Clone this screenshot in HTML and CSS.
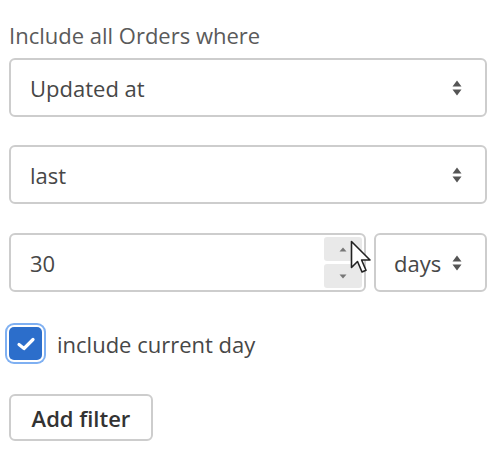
FILE: index.html
```html
<!DOCTYPE html>
<html>
<head>
<meta charset="utf-8">
<link rel="stylesheet" href="styles.css">
</head>
<body>
<div class="panel">
  <div class="title">Include all Orders where</div>
  <div class="select">
    <span class="value">Updated at</span>
    <svg class="arrows" width="10" height="16" viewBox="0 0 10 16"><path d="M5 0.5L9.5 6.5H0.5Z M5 15.5L9.5 9.5H0.5Z" fill="#555"/></svg>
  </div>
  <div class="select">
    <span class="value">last</span>
    <svg class="arrows" width="10" height="16" viewBox="0 0 10 16"><path d="M5 0.5L9.5 6.5H0.5Z M5 15.5L9.5 9.5H0.5Z" fill="#555"/></svg>
  </div>
  <div class="row">
    <div class="number">
      <span class="value">30</span>
      <div class="spin">
        <div class="spin-btn"><svg width="8" height="5" viewBox="0 0 8 5"><path d="M4 0.5L7.5 4.5H0.5Z" fill="#777"/></svg></div>
        <div class="spin-btn"><svg width="8" height="5" viewBox="0 0 8 5"><path d="M4 4.5L7.5 0.5H0.5Z" fill="#777"/></svg></div>
      </div>
    </div>
    <div class="select small">
      <span class="value">days</span>
      <svg class="arrows" width="10" height="16" viewBox="0 0 10 16"><path d="M5 0.5L9.5 6.5H0.5Z M5 15.5L9.5 9.5H0.5Z" fill="#555"/></svg>
    </div>
    <svg class="cursor" width="24" height="36" viewBox="0 0 24 36"><path d="M1.5 1.5V27.5L7.5 21.5L12 32L16 30.3L11.6 20H20Z" fill="#fff" stroke="#222" stroke-width="1.6" stroke-linejoin="round"/></svg>
  </div>
  <label class="check">
    <span class="box"><svg width="20" height="16" viewBox="0 0 20 16"><path d="M3 8.5L8 12.5L17 3.5" fill="none" stroke="#fff" stroke-width="3.2" stroke-linecap="round" stroke-linejoin="round"/></svg></span>
    <span class="check-label">include current day</span>
  </label>
  <button class="btn">Add filter</button>
</div>
</body>
</html>
```
FILE: styles.css
```css
html, body {
  margin: 0;
  padding: 0;
  background: #fff;
}
.panel {
  padding: 20px 13px 0 9px;
  font-family: "Open Sans", "Noto Sans", sans-serif;
  display: flex;
  flex-direction: column;
}
.title {
  font-size: 22px;
  color: #5a5a5a;
  line-height: 30px;
  margin-bottom: 8px;
  white-space: nowrap;
}
.select, .number {
  box-sizing: border-box;
  height: 59px;
  border: 2px solid #cdcdcd;
  border-radius: 6px;
  display: flex;
  align-items: center;
  justify-content: space-between;
  padding: 0 23px 0 19px;
  margin-bottom: 28px;
}
.select + .select {
  margin-bottom: 29px;
}
.value {
  font-size: 22px;
  color: #474747;
}
.row {
  position: relative;
  display: flex;
  gap: 8px;
  margin-bottom: 35px;
}
.row .select, .row .number {
  margin-bottom: 0;
}
.number {
  flex: 1;
  padding-right: 2px;
}
.spin {
  display: flex;
  flex-direction: column;
  gap: 3px;
}
.spin-btn {
  width: 38px;
  height: 24px;
  background: #e9e9e9;
  border-radius: 3px;
  display: flex;
  align-items: center;
  justify-content: center;
}
.select.small {
  width: 113px;
  flex: none;
  padding: 0 23px 0 18px;
}
.cursor {
  position: absolute;
  left: 341px;
  top: 7px;
}
.check {
  display: flex;
  align-items: center;
  gap: 15px;
  height: 33px;
  margin-bottom: 34px;
}
.box {
  box-sizing: border-box;
  width: 33px;
  height: 33px;
  flex: none;
  background: #2c6ecb;
  border-radius: 5px;
  box-shadow: 0 0 0 2px #fff, 0 0 0 4px #7fb0f2;
  display: flex;
  align-items: center;
  justify-content: center;
}
.check-label {
  font-size: 22px;
  color: #474747;
}
.btn {
  align-self: flex-start;
  box-sizing: border-box;
  width: 144px;
  height: 47px;
  border: 2px solid #cdcdcd;
  border-radius: 6px;
  background: #fff;
  font-family: "Open Sans", "Noto Sans", sans-serif;
  font-size: 22px;
  font-weight: 600;
  color: #333;
  padding: 0;
}
```
